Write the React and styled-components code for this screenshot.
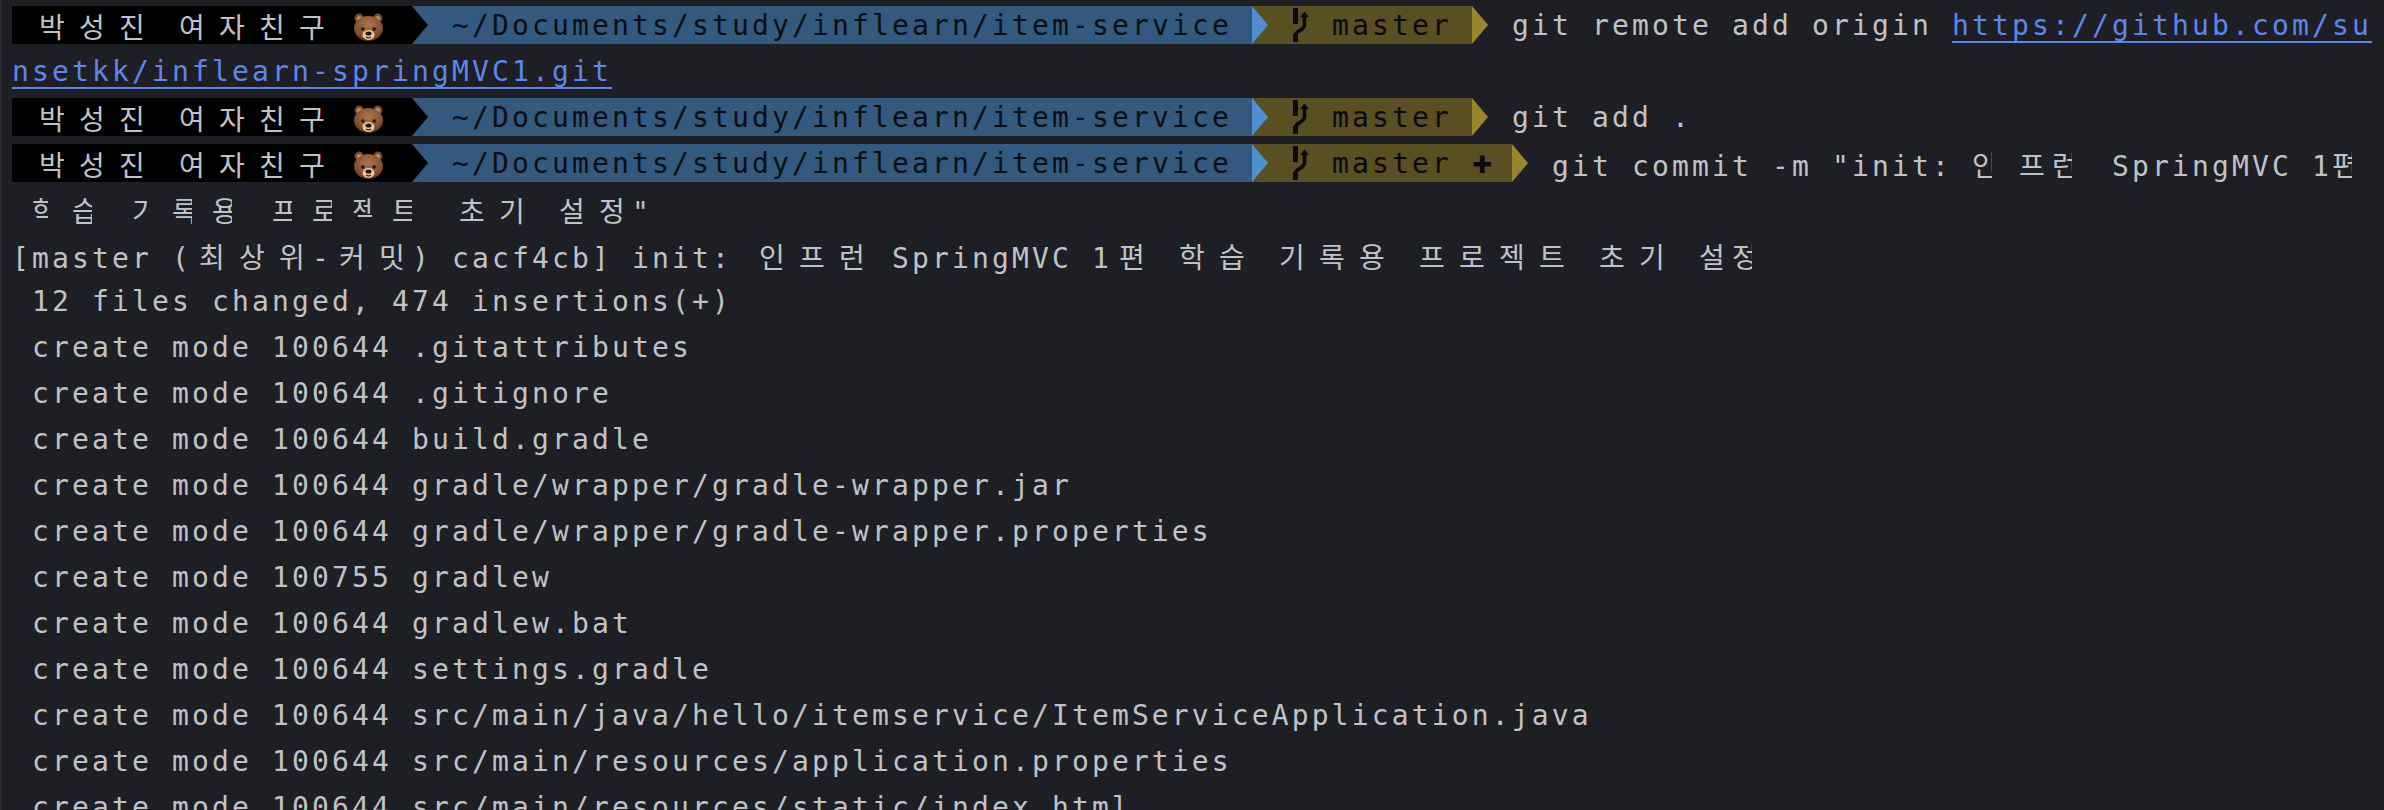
import React from 'react'
import styled, { createGlobalStyle } from 'styled-components'

const CELL = 20

const GlobalStyle = createGlobalStyle`
  html, body {
    margin: 0;
    padding: 0;
    height: 810px;
    overflow: hidden;
    background: #1e1f24;
  }
`

const Terminal = styled.div`
  box-sizing: border-box;
  width: 2384px;
  height: 810px;
  overflow: hidden;
  padding-left: 10px;
  border-left: 2px solid #2b2c31;
  background: #1e1f24;
  color: #c1c2c8;
  font-family: "DejaVu Sans Mono", monospace;
  font-size: 28px;
  letter-spacing: 3.14px;
  -webkit-font-smoothing: antialiased;
`

const Row = styled.div`
  display: flex;
  align-items: flex-start;
  height: 46px;
  line-height: 52px;
  white-space: pre;
`

const Segment = styled.div`
  position: relative;
  box-sizing: border-box;
  flex: none;
  width: ${p => p.$cells * CELL}px;
  height: 38px;
  margin-top: 6px;
  padding-left: ${p => p.$indent * CELL}px;
  line-height: 40px;
  background: ${p => p.$bg};
  color: ${p => p.$fg};

  &::after {
    content: '';
    position: absolute;
    z-index: 1;
    top: 0;
    left: 100%;
    border-left: 16px solid ${p => p.$tip};
    border-top: 19px solid transparent;
    border-bottom: 19px solid transparent;
  }
`

const Command = styled.span`
  margin-left: ${p => p.$gap * CELL}px;
`

const Link = styled.span`
  color: #5c87ea;
  text-decoration: underline;
  text-decoration-thickness: 2px;
  text-decoration-skip-ink: none;
  text-underline-offset: 6px;
`

const Glyph = styled.span`
  display: inline-block;
  width: ${CELL * 2}px;
  letter-spacing: 0;
  font-family: "Noto Sans CJK KR", sans-serif;
  text-align: ${p => (p.$cut ? 'left' : 'center')};
  clip-path: ${p => (p.$cut ? `inset(-10px ${CELL * 2 - p.$cut}px -10px 0)` : 'none')};
`

const BearIcon = styled.svg`
  display: inline-block;
  width: 40px;
  height: 28px;
  vertical-align: -3px;
`

const BranchIcon = styled.svg`
  display: inline-block;
  width: 20px;
  height: 38px;
  vertical-align: top;
`

const Plus = styled.span`
  display: inline-block;
  width: ${CELL}px;
  letter-spacing: 0;
  font-family: "DejaVu Sans", sans-serif;
  font-weight: bold;
  font-size: 24px;
  text-align: center;
`

// cut is how many pixels of the glyph stay visible, the terminal draws some wide glyphs cropped
const Ko = ({ text, cut }) =>
  [...text].map((ch, i) => (
    <Glyph key={i} $cut={cut}>
      {ch}
    </Glyph>
  ))

const Bear = () => (
  <BearIcon viewBox="0 0 40 28">
    <defs>
      <radialGradient id="bearFur" cx="50%" cy="35%" r="68%">
        <stop offset="0%" stopColor="#ad744c" />
        <stop offset="70%" stopColor="#82512f" />
        <stop offset="100%" stopColor="#563320" />
      </radialGradient>
    </defs>
    <circle cx="7.2" cy="5.2" r="4.6" fill="#7a4c2e" />
    <circle cx="25.8" cy="5.2" r="4.6" fill="#7a4c2e" />
    <circle cx="7.4" cy="5.6" r="2.5" fill="#c08a62" />
    <circle cx="25.6" cy="5.6" r="2.5" fill="#c08a62" />
    <ellipse cx="16.5" cy="15.4" rx="14.5" ry="12.4" fill="url(#bearFur)" />
    <ellipse cx="16.5" cy="22" rx="6" ry="5" fill="#e8c89a" />
    <circle cx="10.8" cy="16" r="1.7" fill="#1c120c" />
    <circle cx="22.2" cy="16" r="1.7" fill="#1c120c" />
    <ellipse cx="16.5" cy="20.4" rx="3" ry="2" fill="#20140e" />
    <path d="M14 24q2.5 1.8 5 0" stroke="#3a2416" strokeWidth="1.1" fill="none" />
  </BearIcon>
)

const Branch = () => (
  <BranchIcon viewBox="0 0 20 38">
    <rect x="1" y="2" width="5" height="16" fill="#0a0a0a" />
    <rect x="1" y="28" width="5" height="8" fill="#0a0a0a" />
    <path d="M3.5 29c0-4 9-5 9-10V10" stroke="#0a0a0a" strokeWidth="3.6" fill="none" />
    <path d="M8 11.2l4.5-5.7 4.5 5.7z" fill="#0a0a0a" />
  </BranchIcon>
)

const Prompt = ({ dirty, children }) => (
  <Row>
    <Segment $cells={20} $indent={1} $bg="#000000" $fg="#c1c2c8" $tip="#000000">
      <Ko text="박성진" /> <Ko text="여자친구" /> <Bear />
    </Segment>
    <Segment $cells={42} $indent={2} $bg="#33597f" $fg="#0a0d12" $tip="#4f8fd0">
      ~/Documents/study/inflearn/item-service
    </Segment>
    <Segment $cells={dirty ? 13 : 11} $indent={2} $bg="#5a4e23" $fg="#0a0a0a" $tip="#98862f">
      <Branch /> master{dirty && ' '}
      {dirty && <Plus>✚</Plus>}
    </Segment>
    <Command $gap={2}>{children}</Command>
  </Row>
)

const createdFiles = [
  ['100644', '.gitattributes'],
  ['100644', '.gitignore'],
  ['100644', 'build.gradle'],
  ['100644', 'gradle/wrapper/gradle-wrapper.jar'],
  ['100644', 'gradle/wrapper/gradle-wrapper.properties'],
  ['100755', 'gradlew'],
  ['100644', 'gradlew.bat'],
  ['100644', 'settings.gradle'],
  ['100644', 'src/main/java/hello/itemservice/ItemServiceApplication.java'],
  ['100644', 'src/main/resources/application.properties'],
  ['100644', 'src/main/resources/static/index.html'],
]

const App = () => (
  <Terminal>
    <GlobalStyle />
    <Prompt>
      git remote add origin <Link>https://github.com/su</Link>
    </Prompt>
    <Row>
      <Link>nsetkk/inflearn-springMVC1.git</Link>
    </Row>
    <Prompt>git add .</Prompt>
    <Prompt dirty>
      git commit -m "init: <Ko text="인" cut={20} />
      <Ko text="프" />
      <Ko text="런" cut={20} /> SpringMVC 1<Ko text="편" cut={20} />
    </Prompt>
    <Row>
      <span>
        {' '}
        <Ko text="학" cut={16} />
        <Ko text="습" cut={20} /> <Ko text="기" cut={16} />
        <Ko text="록용" cut={20} /> <Ko text="프로젝트" cut={20} /> <Ko text="초기" /> <Ko text="설정" />"
      </span>
    </Row>
    <Row>
      <span>
        [master (<Ko text="최상위" />-<Ko text="커밋" />) cacf4cb] init: <Ko text="인프런" /> SpringMVC 1<Ko text="편" />{' '}
        <Ko text="학습" /> <Ko text="기록용" /> <Ko text="프로젝트" /> <Ko text="초기" /> <Ko text="설" />
        <Ko text="정" cut={20} />
      </span>
    </Row>
    <Row> 12 files changed, 474 insertions(+)</Row>
    {createdFiles.map(([mode, path]) => (
      <Row key={path}>
        {' create mode '}
        {mode} {path}
      </Row>
    ))}
  </Terminal>
)

export default App
